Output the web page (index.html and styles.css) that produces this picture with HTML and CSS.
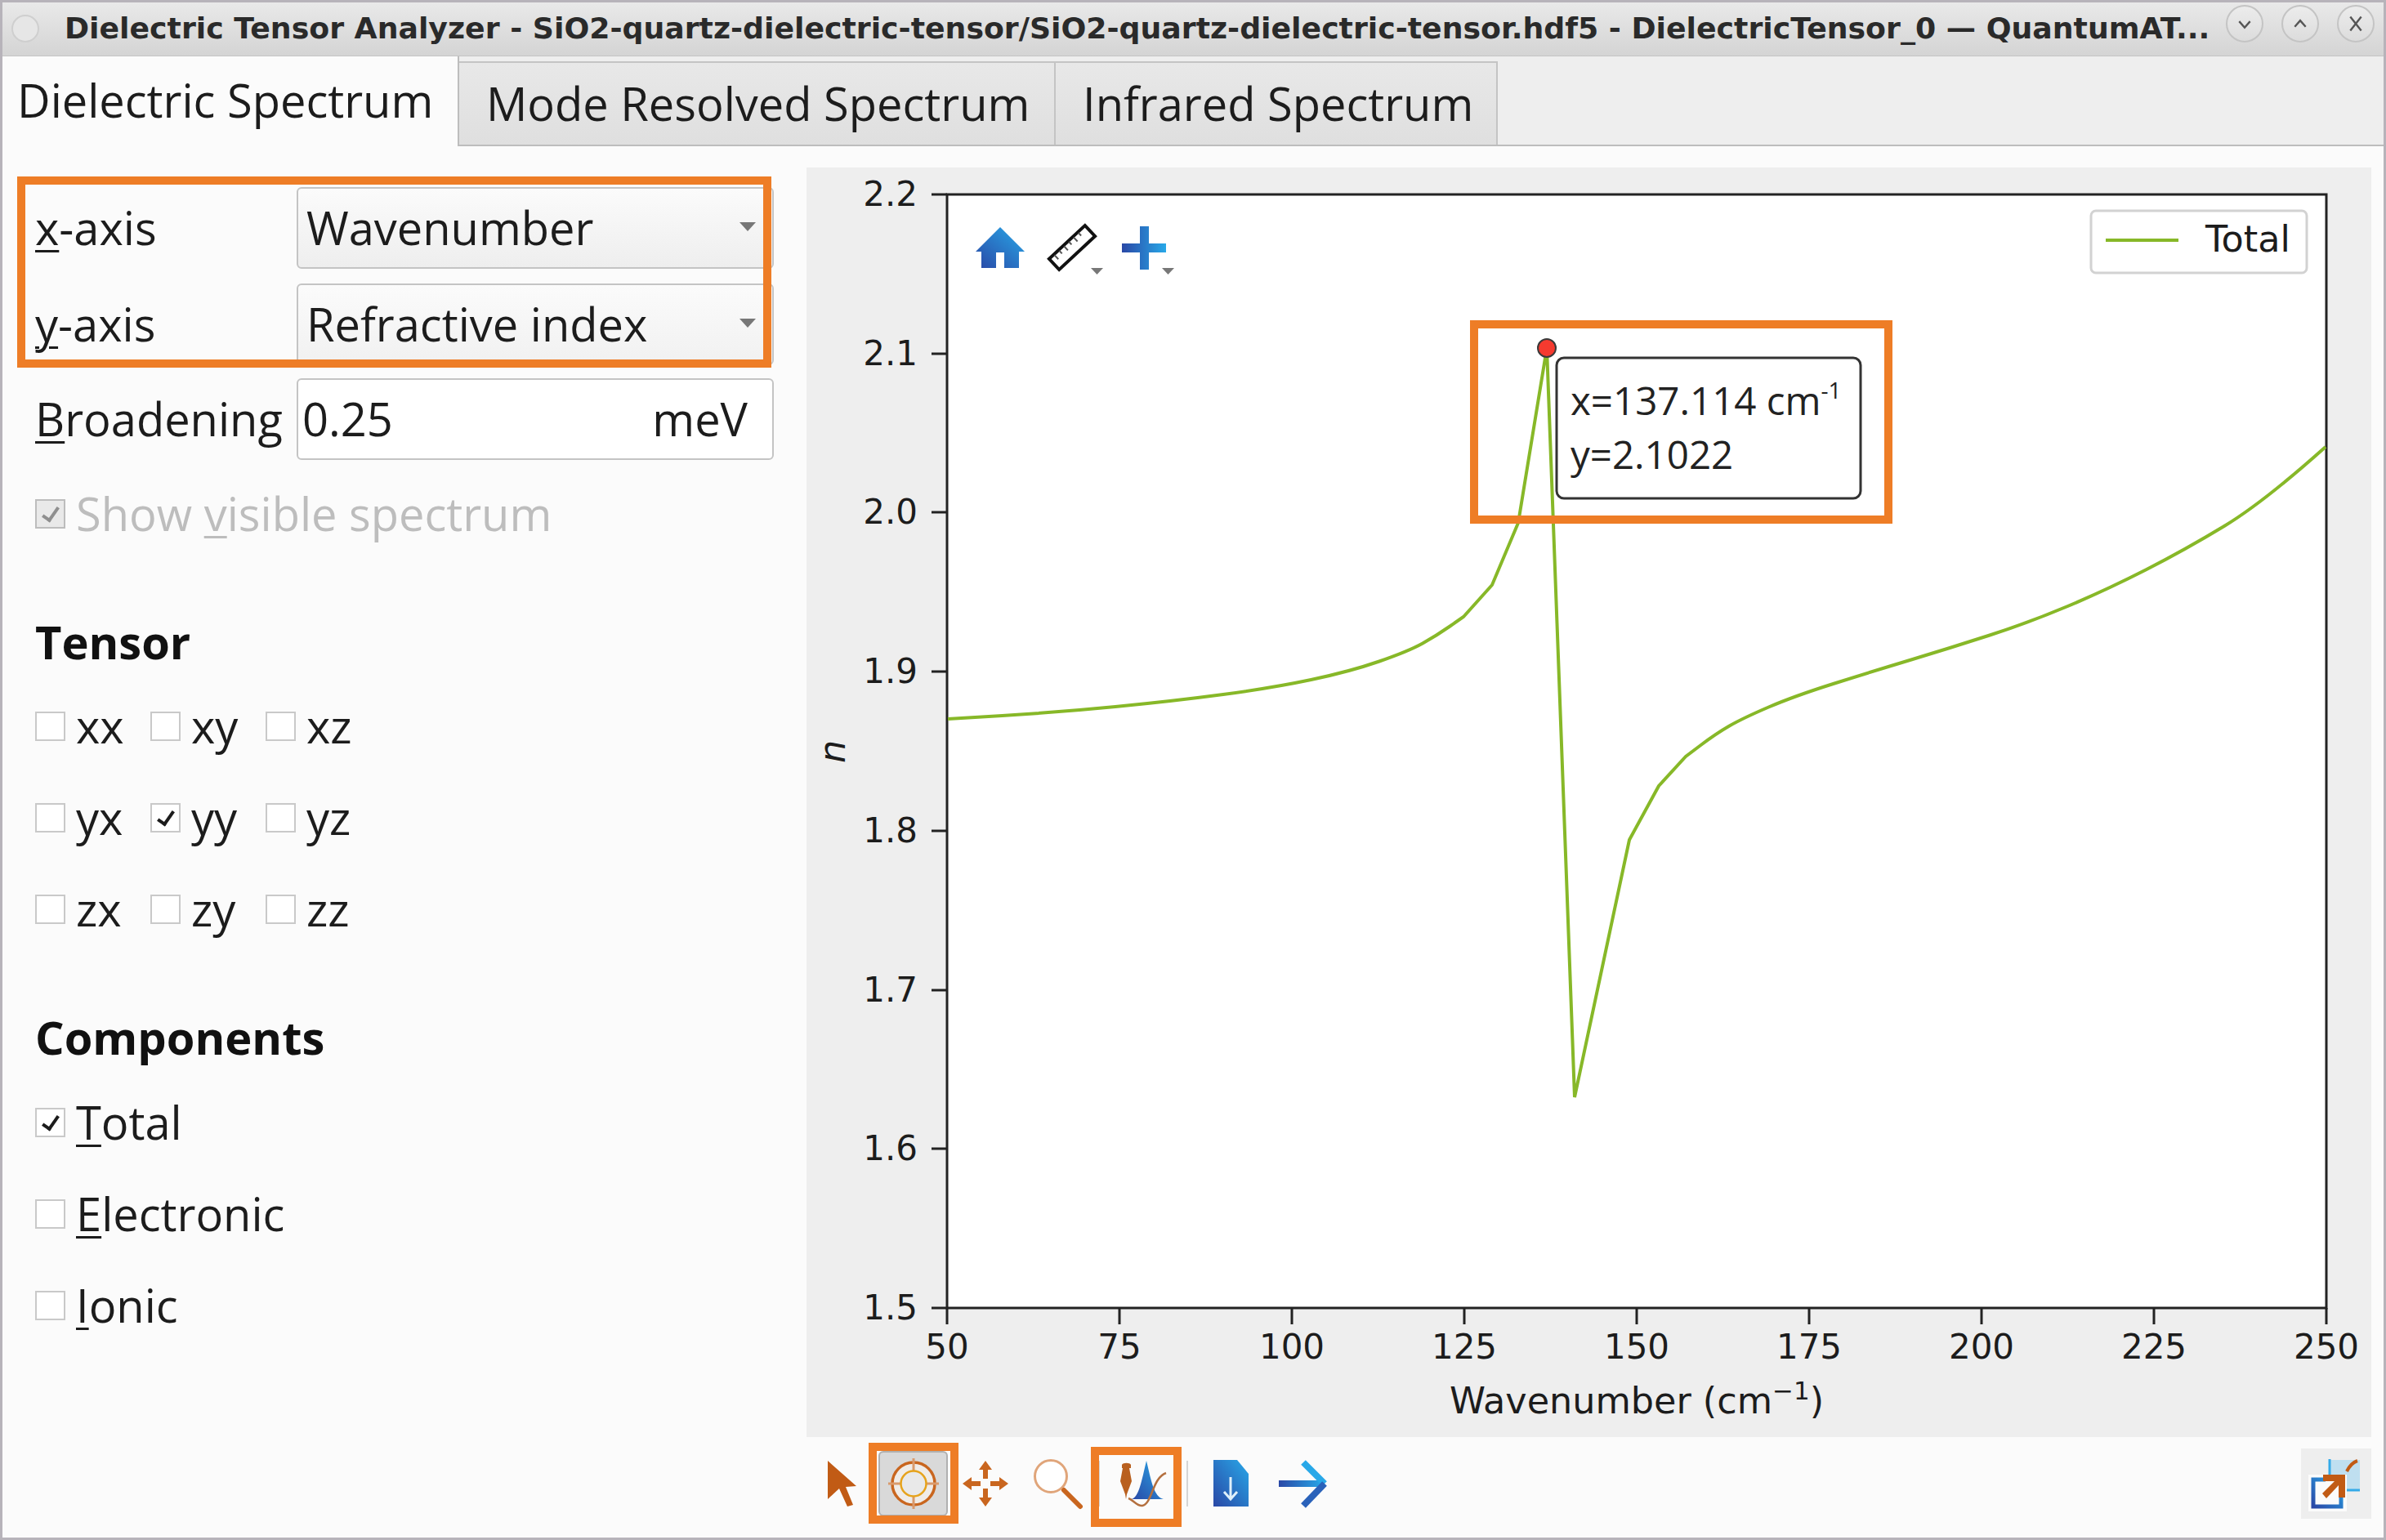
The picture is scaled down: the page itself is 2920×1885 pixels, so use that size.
FILE: index.html
```html
<!DOCTYPE html>
<html>
  <head>
    <title>Dielectric Tensor Analyzer</title>
    <link rel="stylesheet" href="styles.css">
  </head>
  <body>
    <div class="window">
      <div class="titlebar">
        <span class="win-dot"></span>
        <span class="win-title">Dielectric Tensor Analyzer - SiO2-quartz-dielectric-tensor/SiO2-quartz-dielectric-tensor.hdf5 - DielectricTensor_0 — QuantumAT...</span>
        <div class="win-buttons">
          <span class="win-btn">
            <svg viewBox="0 0 44 44"><path d="M15 19l7 8 7-8" /></svg>
          </span>
          <span class="win-btn">
            <svg viewBox="0 0 44 44"><path d="M15 26l7-8 7 8" /></svg>
          </span>
          <span class="win-btn">
            <svg viewBox="0 0 44 44"><path d="M15 13l14 18M29 13l-14 18" /></svg>
          </span>
        </div>
      </div>

      <div class="tabs">
        <div class="tab active">Dielectric Spectrum</div>
        <div class="tab tab-mode">Mode Resolved Spectrum</div>
        <div class="tab tab-ir">Infrared Spectrum</div>
      </div>

      <div class="content">
        <div class="side">
          <div class="field">
            <label><u>x</u>-axis</label>
            <div class="combo">Wavenumber<span class="caret"></span></div>
          </div>
          <div class="field">
            <label><u>y</u>-axis</label>
            <div class="combo combo-y">Refractive index<span class="caret"></span></div>
          </div>
          <div class="field field-last">
            <label><u>B</u>roadening</label>
            <div class="input"><span>0.25</span><span>meV</span></div>
          </div>

          <div class="check disabled show-visible">
            <span class="box on"></span>
            <span class="check-text">Show <u>v</u>isible spectrum</span>
          </div>

          <h3>Tensor</h3>
          <div class="tensor-grid">
            <div class="check"><span class="box"></span><span class="check-text">xx</span></div>
            <div class="check"><span class="box"></span><span class="check-text">xy</span></div>
            <div class="check"><span class="box"></span><span class="check-text">xz</span></div>
            <div class="check"><span class="box"></span><span class="check-text">yx</span></div>
            <div class="check"><span class="box on"></span><span class="check-text">yy</span></div>
            <div class="check"><span class="box"></span><span class="check-text">yz</span></div>
            <div class="check"><span class="box"></span><span class="check-text">zx</span></div>
            <div class="check"><span class="box"></span><span class="check-text">zy</span></div>
            <div class="check"><span class="box"></span><span class="check-text">zz</span></div>
          </div>

          <h3 class="components-title">Components</h3>
          <div class="component-list">
            <div class="check"><span class="box on"></span><span class="check-text"><u>T</u>otal</span></div>
            <div class="check"><span class="box"></span><span class="check-text"><u>E</u>lectronic</span></div>
            <div class="check"><span class="box"></span><span class="check-text"><u>I</u>onic</span></div>
          </div>
        </div>

        <div class="main">
          <svg class="plot" viewBox="987 205 1915 1554">
            <defs>
              <linearGradient id="blueDiag" x1="0" y1="1" x2="1" y2="0">
                <stop offset="0" stop-color="#2a48a6" />
                <stop offset="1" stop-color="#28a8e8" />
              </linearGradient>
              <linearGradient id="blueH" x1="0" y1="0" x2="1" y2="0">
                <stop offset="0" stop-color="#2a48a6" />
                <stop offset="1" stop-color="#28a8e8" />
              </linearGradient>
            </defs>

            <rect class="axes" x="1159" y="238" width="1688" height="1363" />

            <g class="ticks">
              <path d="M1140 238h19M1140 433h19M1140 627h19M1140 822h19M1140 1017h19M1140 1212h19M1140 1406h19M1140 1601h19" />
              <path d="M1159 1601v20M1370 1601v20M1581 1601v20M1792 1601v20M2003 1601v20M2214 1601v20M2425 1601v20M2636 1601v20M2847 1601v20" />
            </g>

            <g class="tick-labels y-labels">
              <text x="1123" y="252">2.2</text>
              <text x="1123" y="447">2.1</text>
              <text x="1123" y="641">2.0</text>
              <text x="1123" y="836">1.9</text>
              <text x="1123" y="1031">1.8</text>
              <text x="1123" y="1226">1.7</text>
              <text x="1123" y="1420">1.6</text>
              <text x="1123" y="1615">1.5</text>
            </g>
            <g class="tick-labels x-labels">
              <text x="1159" y="1663">50</text>
              <text x="1370" y="1663">75</text>
              <text x="1581" y="1663">100</text>
              <text x="1792" y="1663">125</text>
              <text x="2003" y="1663">150</text>
              <text x="2214" y="1663">175</text>
              <text x="2425" y="1663">200</text>
              <text x="2636" y="1663">225</text>
              <text x="2847" y="1663">250</text>
            </g>
            <text class="axis-label" x="2003" y="1730">Wavenumber (cm<tspan class="sup" dy="-17">−1</tspan><tspan dy="17">)</tspan></text>
            <text class="axis-label y-title" transform="translate(1034 920) rotate(-90)">n</text>

            <path class="curve" d="M1160 880L1226.500 876Q1293 872 1365 865Q1437 858 1497 850Q1557 842 1604.500 832Q1652 822 1688 809.500Q1724 797 1741 787.500Q1758 778 1774.500 766.500L1791 755L1826 716L1858 640L1893 426L1927 1343L1994 1028L2030 962L2063 926L2081.500 912Q2100 898 2116.500 888.500Q2133 879 2164.500 865.500Q2196 852 2243.500 837Q2291 822 2339 807.500Q2387 793 2435 777.500Q2483 762 2530.500 742Q2578 722 2626 697.500Q2674 673 2722 644Q2770 615 2846 547" />

            <!-- plot toolbar -->
            <path fill="url(#blueDiag)" d="M1224 278l30 30h-7v20h-18v-19h-10v19h-18v-20h-7z" />
            <g transform="rotate(-43 1312 303)">
              <rect class="ruler" x="1282" y="294" width="60" height="18" />
              <path class="ruler-ticks" d="M1290 295v7M1298 295v5M1306 295v7M1314 295v5M1322 295v7M1330 295v5" />
            </g>
            <path class="mini-caret" d="M1335 328h15l-7.500 8z" />
            <path fill="url(#blueH)" d="M1395 277h11v21h21v11h-21v21h-11v-21h-22v-11h22z" />
            <path class="mini-caret" d="M1422 328h15l-7.500 8z" />

            <g>
              <rect class="legend" x="2559" y="258" width="264" height="76" rx="6" />
              <path class="curve" d="M2577 294h89" />
              <text class="legend-text" x="2699" y="308">Total</text>
            </g>

            <!-- marker -->
            <rect class="tip" x="1905" y="438" width="372" height="172" rx="9" />
            <circle class="dot" cx="1893" cy="426" r="11" />
            <text class="tip-text" x="1922" y="508">x=137.114 cm<tspan class="tip-sup" dy="-20">-1</tspan></text>
            <text class="tip-text" x="1922" y="574">y=2.1022</text>
          </svg>

          <div class="toolbar">
            <div class="tool">
              <svg viewBox="0 0 64 64"><path fill="#c15b15" d="M15 4l35 31-13 1 9 22-7 2-10-22-14 13z" /></svg>
            </div>
            <div class="tool active">
              <svg viewBox="0 0 64 64">
                <circle cx="32" cy="32" r="26" fill="#f0ece8" stroke="#c9661f" stroke-width="3.500" />
                <path d="M32 1v62M1 32h62" stroke="#d99a6c" stroke-width="3" />
                <circle cx="32" cy="32" r="15.500" fill="#e9e9e9" stroke="#e6a31c" stroke-width="2.500" />
              </svg>
            </div>
            <div class="tool">
              <svg viewBox="0 0 64 64">
                <g fill="#c9661f">
                  <path id="panArm" d="M32 4l8 11h-5v11h-6V15h-5z" />
                  <use href="#panArm" transform="rotate(90 32 32)" />
                  <use href="#panArm" transform="rotate(180 32 32)" />
                  <use href="#panArm" transform="rotate(270 32 32)" />
                </g>
              </svg>
            </div>
            <div class="tool">
              <svg viewBox="0 0 64 64">
                <circle cx="24" cy="23" r="19.500" fill="#fff" stroke="#e0a57a" stroke-width="3" />
                <path d="M40 40l20 20" stroke="#c9661f" stroke-width="6" stroke-linecap="round" />
              </svg>
            </div>
            <span class="tool-sep"></span>
            <div class="tool">
              <svg viewBox="0 0 64 64">
                <defs>
                  <linearGradient id="peakFill" x1="0" y1="1" x2="1" y2="0">
                    <stop offset="0" stop-color="#2a48a6" />
                    <stop offset="1" stop-color="#28a8e8" />
                  </linearGradient>
                </defs>
                <path fill="url(#peakFill)" d="M17 51c9-3 12-22 18-47 6 25 9 44 21 47z" />
                <path fill="#b9601f" d="M5 9c1-3 10-3 11 0v4h-2l3 16-6 16-1 6-1-6-6-16 3-16H5z" />
                <path d="M13 50c6 2 11 10 17 9 12-2 12-34 29-40" fill="none" stroke="#b4703f" stroke-width="2.500" />
              </svg>
            </div>
            <span class="tool-sep sep-right"></span>
            <div class="tool">
              <svg viewBox="0 0 64 64">
                <defs>
                  <linearGradient id="saveFill" x1="0" y1="1" x2="1" y2="0">
                    <stop offset="0" stop-color="#2a48a6" />
                    <stop offset="1" stop-color="#28a8e8" />
                  </linearGradient>
                </defs>
                <path fill="url(#saveFill)" d="M11 3h29l14 17v40H11z" />
                <path d="M32 24v26M24 42l8 9 8-9" fill="none" stroke="#dff0fa" stroke-width="3" />
              </svg>
            </div>
            <div class="tool">
              <svg viewBox="0 0 64 64">
                <defs>
                  <linearGradient id="nextFill" x1="0" y1="0" x2="1" y2="0">
                    <stop offset="0" stop-color="#2a48a6" />
                    <stop offset="1" stop-color="#28a8e8" />
                  </linearGradient>
                </defs>
                <rect x="3" y="28" width="54" height="8" fill="url(#nextFill)" />
                <path d="M33 6l26 26" stroke="#28a8e8" stroke-width="8" />
                <path d="M59 32L33 59" stroke="#2a62ba" stroke-width="8" />
              </svg>
            </div>
            <div class="expand">
              <svg viewBox="0 0 86 86">
                <defs>
                  <linearGradient id="expandFill" x1="0" y1="1" x2="1" y2="0">
                    <stop offset="0" stop-color="#2a48a6" />
                    <stop offset="1" stop-color="#28a8e8" />
                  </linearGradient>
                </defs>
                <path fill="#bfdff0" d="M35 14h37v36H35z" />
                <path d="M35 13v38h37" fill="none" stroke="#35aae8" stroke-width="3" />
                <path d="M56 28c3-6 7-11 13-13" fill="none" stroke="#c15b15" stroke-width="4" />
                <rect x="9" y="32" width="47" height="45" fill="#fbfbfb" />
                <path d="M30 38H15v33h34V58" fill="none" stroke="url(#expandFill)" stroke-width="5" />
                <path fill="#c15b15" d="M27 32h27v28h-8V45L31 61l-5-6 15-15H27z" />
              </svg>
            </div>
          </div>
        </div>
      </div>

      <!-- orange annotations drawn on top of the screenshot -->
      <div class="mark mark-axes"></div>
      <div class="mark mark-tip"></div>
      <div class="mark mark-target"></div>
      <div class="mark mark-peak"></div>
    </div>
  </body>
</html>
```

FILE: styles.css
```css
body {
  margin: 0;
  font-family: "Open Sans", "Noto Sans", sans-serif;
  color: #1c1c1c;
}

.window {
  position: relative;
  box-sizing: border-box;
  width: 2920px;
  height: 1885px;
  display: flex;
  flex-direction: column;
  background-color: #fbfbfb;
  border: 3px solid #b7b3ba;
  border-top: none;
  overflow: hidden;
}

.titlebar {
  box-sizing: border-box;
  height: 69px;
  padding-bottom: 2px;
  display: flex;
  align-items: center;
  border-top: 3px solid #b7b3ba;
  background: linear-gradient(#e9e9e9, #d4d4d4);
  border-bottom: 1px solid #c4c4c4;
  flex-shrink: 0;
}

.win-dot {
  width: 30px;
  height: 30px;
  margin-left: 11px;
  border-radius: 50%;
  border: 2px solid #cfcfcf;
  background-color: #e6e6e6;
}

.win-title {
  margin-left: 31px;
  font-family: "DejaVu Sans", sans-serif;
  font-weight: bold;
  font-size: 36.25px;
  white-space: nowrap;
  color: #2a2a2a;
}

.win-buttons {
  position: absolute;
  right: 11px;
  top: 6px;
  display: flex;
  gap: 22px;
}

.win-btn {
  width: 46px;
  height: 46px;
  border: 2px solid #c4c4c4;
  border-radius: 50%;
  box-sizing: border-box;
  background: linear-gradient(#ececec, #dcdcdc);
}

.win-btn svg {
  display: block;
  width: 42px;
  height: 42px;
}

.win-btn path {
  fill: none;
  stroke: #555;
  stroke-width: 2.5;
}

.tabs {
  box-sizing: border-box;
  height: 110px;
  display: flex;
  align-items: flex-end;
  background-color: #eee;
  border-bottom: 2px solid #bdbdbd;
  flex-shrink: 0;
  font-size: 56px;
  white-space: nowrap;
}

.tab {
  box-sizing: border-box;
  height: 102px;
  padding-left: 33px;
  line-height: 98px;
  background: linear-gradient(#e8e8e8, #dfdfdf);
  border: 2px solid #c4c4c4;
  border-left: none;
  border-bottom: none;
}

.tab.active {
  width: 559px;
  height: 110px;
  margin-bottom: -2px;
  padding-left: 18px;
  line-height: 107px;
  background: #fbfbfb;
  border-top: none;
  border-right-color: #bdbdbd;
}

.tab-mode {
  width: 730px;
}

.tab-ir {
  width: 541px;
}

.content {
  flex: 1;
  display: flex;
}

.side {
  box-sizing: border-box;
  width: 984px;
  padding: 50px 0 0 40px;
  font-size: 56px;
}

.field {
  display: grid;
  grid-template-columns: 320px 584px;
  align-items: center;
  margin-bottom: 18px;
}

.field-last {
  margin-top: -2px;
  margin-bottom: 0;
}

label {
  display: block;
  padding-bottom: 3px;
}

u {
  text-underline-offset: 6px;
  text-decoration-thickness: 3px;
}

.combo,
.input {
  box-sizing: border-box;
  height: 100px;
  padding-bottom: 3px;
  display: flex;
  align-items: center;
  justify-content: space-between;
  border: 2px solid #c4c4c4;
  border-radius: 6px;
}

.combo {
  padding-left: 10px;
  padding-right: 20px;
  background: linear-gradient(#fbfbfb, #eee);
}

.combo-y {
  background: linear-gradient(#fbfbfb, #f1f1f1);
}

.input {
  padding-left: 5px;
  padding-right: 30px;
  background-color: #fff;
}

.caret {
  width: 0;
  height: 0;
  border-left: 10px solid transparent;
  border-right: 10px solid transparent;
  border-top: 11px solid #777;
}

.check {
  height: 72px;
  display: flex;
  align-items: center;
  gap: 13px;
}

.check-text {
  padding-bottom: 3px;
}

.check.disabled {
  color: #bdbdbd;
}

.show-visible {
  margin-top: 30px;
}

.box {
  box-sizing: border-box;
  width: 37px;
  height: 36px;
  flex-shrink: 0;
  position: relative;
  background-color: #fff;
  border: 2px solid #c9c9c9;
}

.box.on::after {
  content: "";
  position: absolute;
  left: 11px;
  top: 4px;
  width: 8px;
  height: 17px;
  border: solid #1c1c1c;
  border-width: 0 4px 4px 0;
  transform: rotate(35deg);
}

.disabled .box {
  background-color: #e9e9e9;
  border-color: #bdbdbd;
}

.disabled .box.on::after {
  border-color: #8f8f8f;
}

h3 {
  margin: 85px 0 33px;
  font-size: 56px;
  line-height: 70px;
  color: #111;
}

.tensor-grid {
  display: grid;
  grid-template-columns: repeat(3, 141px);
  grid-auto-rows: 72px;
  row-gap: 40px;
}

.components-title {
  margin-top: 85px;
  margin-bottom: 34px;
}

.component-list {
  display: grid;
  grid-auto-rows: 72px;
  row-gap: 40px;
}

.main {
  width: 1915px;
  padding-top: 26px;
}

.plot {
  display: block;
  width: 1915px;
  height: 1554px;
  background-color: #eee;
}

.axes {
  fill: #fff;
  stroke: #222;
  stroke-width: 3;
}

.ticks path {
  fill: none;
  stroke: #222;
  stroke-width: 3;
}

.tick-labels text,
.axis-label,
.legend-text {
  font-family: "DejaVu Sans", sans-serif;
  font-size: 42px;
  fill: #1c1c1c;
}

.axis-label,
.legend-text {
  font-size: 44.5px;
}

.y-labels text {
  text-anchor: end;
}

.x-labels text,
.axis-label {
  text-anchor: middle;
}

.sup {
  font-size: 31px;
}

.y-title {
  font-style: italic;
}

.curve {
  fill: none;
  stroke: #87b828;
  stroke-width: 4;
}

.legend {
  fill: #fff;
  stroke: #d2d2d2;
  stroke-width: 3;
}

.ruler {
  fill: #fff;
  stroke: #111;
  stroke-width: 4;
}

.ruler-ticks {
  fill: none;
  stroke: #555;
  stroke-width: 2;
}

.mini-caret {
  fill: #777;
}

.tip {
  fill: #fff;
  stroke: #333;
  stroke-width: 3;
}

.dot {
  fill: #f53a2f;
  stroke: #3a3a3a;
  stroke-width: 2;
}

.tip-text {
  font-family: "Open Sans", "Noto Sans", sans-serif;
  font-size: 47.5px;
  fill: #222;
}

.tip-sup {
  font-size: 28px;
}

.toolbar {
  display: flex;
  align-items: center;
  gap: 3px;
  padding-top: 14px;
}

.tool {
  box-sizing: border-box;
  width: 85px;
  height: 80px;
  display: flex;
  align-items: center;
  justify-content: center;
  border: 2px solid transparent;
  border-radius: 6px;
}

.tool svg {
  flex-shrink: 0;
  width: 64px;
  height: 64px;
}

.tool.active {
  background-color: #d9d9d9;
  border-color: #b0b0b0;
}

.tool-sep {
  width: 2px;
  height: 56px;
  margin: 0 8px 0 5px;
  background-color: #d5d5d5;
}

.sep-right {
  margin: 0 6px 0 7px;
}

.expand {
  width: 86px;
  height: 86px;
  margin-left: auto;
  background-color: #eee;
}

.expand svg {
  display: block;
  width: 86px;
  height: 86px;
}

.mark {
  position: absolute;
  box-sizing: border-box;
  border: 10px solid #ee7d26;
}

.mark-axes {
  left: 18px;
  top: 216px;
  width: 923px;
  height: 234px;
}

.mark-tip {
  left: 1796px;
  top: 392px;
  width: 517px;
  height: 249px;
}

.mark-target {
  left: 1060px;
  top: 1766px;
  width: 110px;
  height: 99px;
}

.mark-peak {
  left: 1332px;
  top: 1771px;
  width: 111px;
  height: 98px;
}
```
